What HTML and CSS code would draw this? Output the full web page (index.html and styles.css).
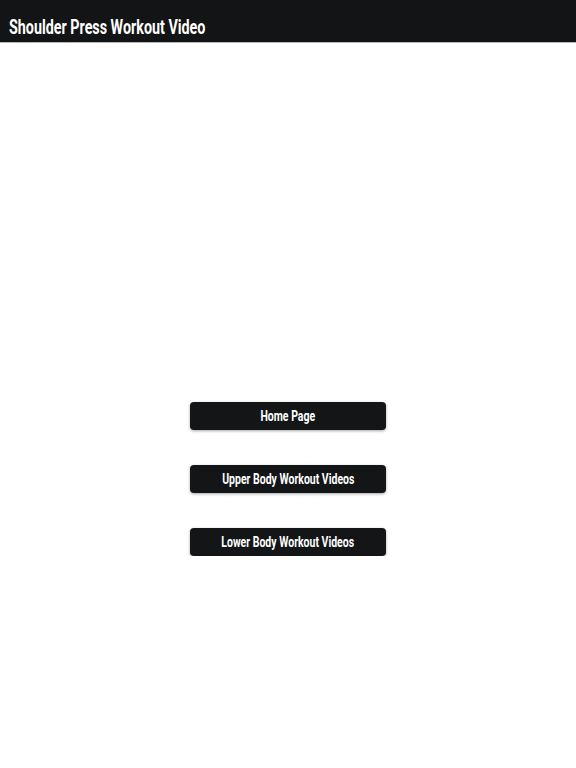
FILE: index.html
```html
<!DOCTYPE html>
<html>
<head>
<meta charset="utf-8">
<link rel="stylesheet" href="styles.css">
</head>
<body>
<header class="topbar">
  <h1 class="title"><span class="title-text">Shoulder Press Workout Video</span></h1>
</header>
<main class="content">
  <div class="video"></div>
  <nav class="buttons">
    <a class="btn" href="#"><span class="btn-text">Home Page</span></a>
    <a class="btn" href="#"><span class="btn-text">Upper Body Workout Videos</span></a>
    <a class="btn" href="#"><span class="btn-text">Lower Body Workout Videos</span></a>
  </nav>
</main>
</body>
</html>
```
FILE: styles.css
```css
html, body {
  margin: 0;
  padding: 0;
  background: #ffffff;
}
body {
  font-family: Roboto, "Liberation Sans", sans-serif;
}
.topbar {
  height: 42px;
  background: #131416;
  border-bottom: 1px solid #b4b4b4;
  display: flex;
  align-items: center;
  padding: 0 9px;
}
.title {
  margin: 0;
  padding-top: 13px;
  color: #ffffff;
  font-size: 19.5px;
  line-height: 22px;
  font-weight: bold;
}
.title-text {
  display: inline-block;
  transform: scaleX(0.734);
  transform-origin: left center;
  white-space: nowrap;
}
.content {
  display: flex;
  flex-direction: column;
  align-items: center;
}
.video {
  height: 359px;
}
.buttons {
  display: flex;
  flex-direction: column;
  gap: 35px;
}
.btn {
  display: flex;
  align-items: center;
  justify-content: center;
  width: 196px;
  height: 28px;
  background: #141517;
  color: #ffffff;
  border-radius: 4px;
  box-shadow: 0 1px 3px rgba(0,0,0,0.35);
  text-decoration: none;
  font-size: 14.5px;
  font-weight: bold;
}
.btn-text {
  display: inline-block;
  transform: scaleX(0.724);
  white-space: nowrap;
}
```
